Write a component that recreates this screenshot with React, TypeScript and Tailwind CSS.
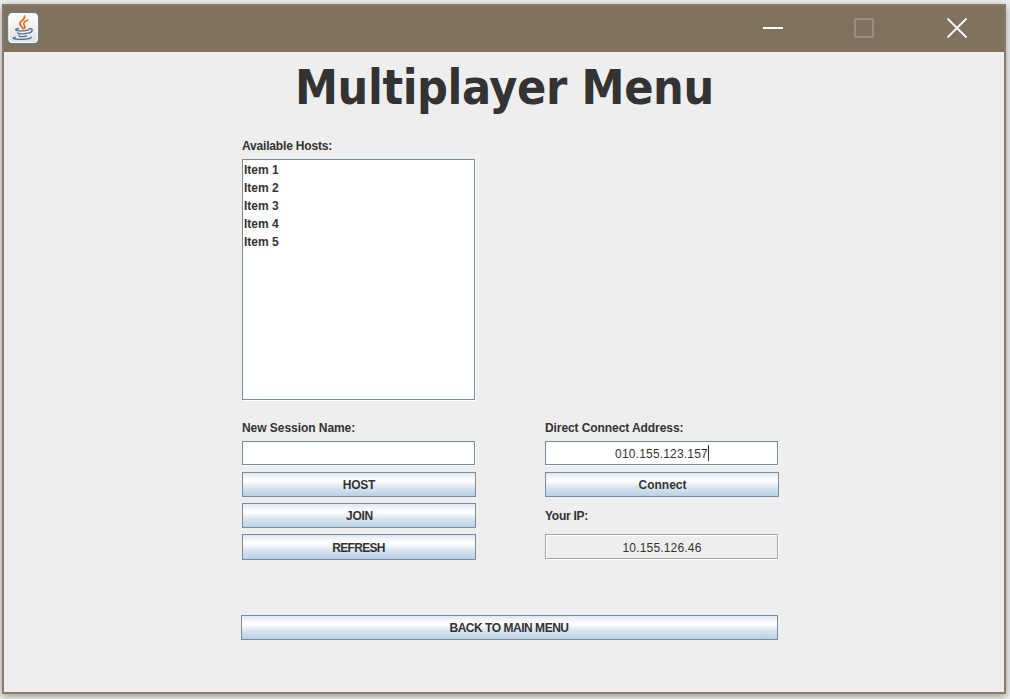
import React from 'react';

function JavaIcon() {
  return (
    <svg width="32" height="32" viewBox="0 0 32 32" fill="none">
      <defs>
        <linearGradient id="tile" x1="0" y1="0" x2="0" y2="1">
          <stop offset="0" stopColor="#ffffff" />
          <stop offset="1" stopColor="#dedede" />
        </linearGradient>
      </defs>
      <rect x="0.800" y="0.600" width="30.600" height="31" rx="4.500" fill="url(#tile)" stroke="#5f7f98" strokeWidth="1.100" />
      <rect x="2" y="1.800" width="28.200" height="28.600" rx="3" stroke="#ffffff" strokeWidth="1" />
      <g stroke="#e8711c" strokeLinecap="round">
        <path d="M17.500 4.200c1.300 3.300-5 4.500-4.600 7.600.3 2 2.300 3.100 3.200 4.700" strokeWidth="1.900" />
        <path d="M20.700 8.200c-3 1.100-4.400 2.500-3.800 4.200.5 1.300 1.700 2 .7 3.900" strokeWidth="1.700" />
      </g>
      <g stroke="#4d7394" strokeWidth="1.300" strokeLinecap="round">
        <path d="M11.500 16.500c-3 .5-3.800 1.500-2 1.800 3.500.7 9 .5 12.500-.4" />
        <path d="M11 20.600c-.6.9 1.500 1.300 4.500 1.300 2.200 0 3.800-.3 5-.7" />
        <path d="M12 23.400c-.4.900 1.500 1.200 3.500 1.200 1.800 0 3.200-.3 4.200-.7" />
        <path d="M22 16.900c4.400-1.200 4.200 3-.3 4.300" />
        <path d="M8.500 25.300c-4 .6-2.500 1.900 3.400 2.100 6 .2 13-.7 12.300-2.200" />
      </g>
    </svg>
  );
}

function Label({ children, className = '' }: { children: React.ReactNode; className?: string }) {
  return <div className={`h-[14px] text-[12px] leading-[14px] font-bold whitespace-nowrap ${className}`}>{children}</div>;
}

function Button({ children, className = 'h-[25px] pl-px' }: { children: React.ReactNode; className?: string }) {
  return (
    <button
      className={`flex w-full items-center justify-center border border-[#7a8a99] bg-[linear-gradient(to_bottom,#dde8f3_0%,#ffffff_30%,#ffffff_36%,#dbe6f1_62%,#b8cfe5_100%)] text-[12px] leading-[14px] font-bold ${className}`}
    >
      {children}
    </button>
  );
}

export default function App() {
  return (
    <div className="h-[699px] w-[1010px] overflow-hidden bg-[#f0f0f0] pt-1 pl-0.5 font-['Liberation_Sans',Arial,sans-serif] text-[#333333]">
      <div className="flex h-[690px] w-[1004px] flex-col border-2 border-[#877d69] bg-[#eeeeee] shadow-[0_2px_8px_0_rgba(0,0,0,0.4)]">
        <header className="flex h-[46px] shrink-0 items-center justify-between bg-[#7f735f] pr-[36px] pl-[3px]">
          <div className="-mt-0.5"><JavaIcon /></div>
          <svg width="206" height="22" viewBox="0 0 206 22" fill="none" className="-mt-0.5">
            <path d="M1 11h20" stroke="#ffffff" strokeWidth="2" />
            <rect x="93" y="2" width="18" height="18" stroke="#998f7f" strokeWidth="2" />
            <path d="M185.500 1.500l19 19M204.500 1.500l-19 19" stroke="#f7f5f2" strokeWidth="1.900" />
          </svg>
        </header>
        <main className="flex flex-col pl-[238px]">
          <h1 className="ml-[53px] h-[87px] pt-[6px] font-['DejaVu_Sans_Condensed','DejaVu_Sans',sans-serif] text-[48px] leading-[58px] font-bold tracking-[-0.380px] whitespace-nowrap [font-stretch:condensed]">
            Multiplayer Menu
          </h1>
          <Label className="tracking-[-0.180px]">Available Hosts:</Label>
          <ul className="mt-[6px] h-[241px] w-[233px] border border-[#7a8a99] bg-white pt-px pl-px text-[12px] leading-[18px] font-bold shadow-[1px_1px_0_#ffffff]">
            {[1, 2, 3, 4, 5].map((n) => <li key={n}>Item {n}</li>)}
          </ul>
          <div className="mt-[21px] flex gap-[69px]">
            <section className="flex w-[234px] flex-col">
              <Label className="tracking-[-0.050px]">New Session Name:</Label>
              <div className="mt-[6px] h-6 w-[233px] border border-[#7a8a99] bg-white shadow-[1px_1px_0_#ffffff]" />
              <div className="mt-[7px] flex flex-col gap-[6px]">
                <Button className="h-[25px] tracking-[-0.200px]">HOST</Button>
                <Button className="h-[25px] pl-px tracking-[-0.300px]">JOIN</Button>
                <Button className="h-[26px] pt-[2px] pr-px tracking-[-0.700px]">REFRESH</Button>
              </div>
            </section>
            <section className="flex w-[234px] flex-col">
              <Label className="tracking-[-0.080px]">Direct Connect Address:</Label>
              <div className="mt-[6px] flex h-6 w-[233px] items-center justify-center border border-[#7a8a99] bg-white pt-px pl-px text-[12px] shadow-[1px_1px_0_#ffffff]">
                <span className="tracking-[0.180px]">010.155.123.157</span>
                <span className="-mt-0.5 h-4 w-px bg-[#333333]" />
              </div>
              <div className="mt-[7px]"><Button>Connect</Button></div>
              <Label className="mt-[12px] tracking-[-0.250px]">Your IP:</Label>
              <div className="mt-[11px] flex h-[25px] w-[233px] items-center justify-center border border-[#a6a6a6] bg-[#eeeeee] pt-[2px] pl-px text-[12px] tracking-[0.180px] shadow-[1px_1px_0_#ffffff,inset_1px_1px_0_#ffffff]">
                10.155.126.46
              </div>
            </section>
          </div>
          <div className="mt-[55px] -ml-px w-[537px]"><Button className="h-[25px] pr-px tracking-[-0.470px]">BACK TO MAIN MENU</Button></div>
        </main>
      </div>
    </div>
  );
}
